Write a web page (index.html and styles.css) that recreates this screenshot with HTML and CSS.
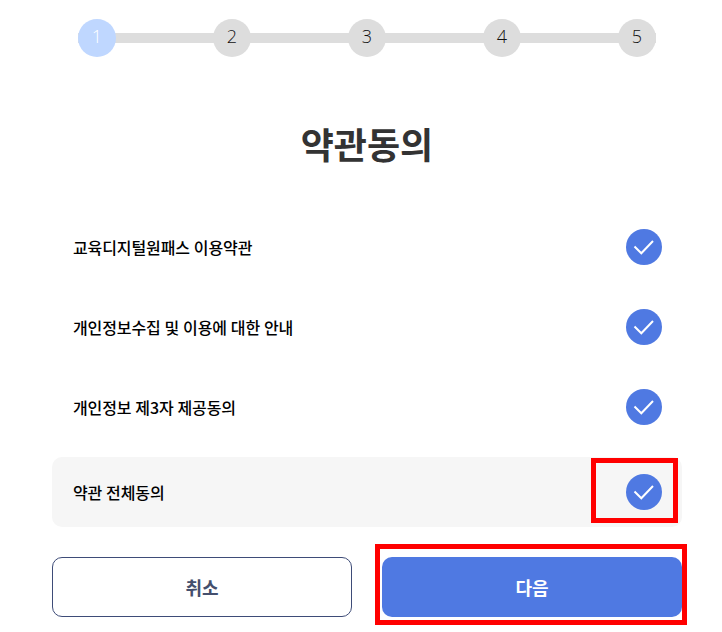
FILE: index.html
```html
<!DOCTYPE html>
<html lang="ko">
<head>
<meta charset="utf-8" />
<title>약관동의</title>
<link rel="stylesheet" href="styles.css">
</head>
<body>
<div class="wrap">

<div class="steps">
<span class="step on">1</span>
<span class="step">2</span>
<span class="step">3</span>
<span class="step">4</span>
<span class="step">5</span>
</div>

<h1 class="title">약관동의</h1>

<ul class="terms">
<li class="term">
<span>교육디지털원패스 이용약관</span>
<span class="check"><svg viewBox="0 0 36 36"><path d="M8.5 17.5l6.8 6.8L27 12"/></svg></span>
</li>
<li class="term">
<span>개인정보수집 및 이용에 대한 안내</span>
<span class="check"><svg viewBox="0 0 36 36"><path d="M8.5 17.5l6.8 6.8L27 12"/></svg></span>
</li>
<li class="term">
<span>개인정보 제3자 제공동의</span>
<span class="check"><svg viewBox="0 0 36 36"><path d="M8.5 17.5l6.8 6.8L27 12"/></svg></span>
</li>
</ul>

<div class="term_all">
<span>약관 전체동의</span>
<span class="check"><svg viewBox="0 0 36 36"><path d="M8.5 17.5l6.8 6.8L27 12"/></svg></span>
<div class="mark mark_check"></div>
</div>

<div class="btns">
<button type="button" class="btn btn_cancel">취소</button>
<button type="button" class="btn btn_next">다음</button>
<div class="mark mark_next"></div>
</div>

</div>
</body>
</html>
```

FILE: styles.css
```css
html,body{
	margin:0;
	padding:0;
	background:#fff;
}
body{
	font-family:"Noto Sans CJK KR","Noto Sans",sans-serif;
	color:#000;
}
.wrap{
	width:630px;
	margin-left:52px;
	padding:19px 0 15px;
}
.steps{
	display:flex;
	justify-content:space-between;
	margin:0 26px;
	background:linear-gradient(#ddd,#ddd) no-repeat center / 100% 10px;
}
.step{
	width:38px;
	height:38px;
	border-radius:50%;
	background:#ddd;
	color:#111;
	font-family:"Open Sans",sans-serif;
	font-size:18px;
	font-weight:300;
	line-height:35px;
	text-align:center;
}
.step.on{
	background:#bfd7ff;
	color:#fff;
}
.title{
	margin:59px 0 0;
	height:54px;
	font-size:36px;
	font-weight:700;
	line-height:54px;
	text-align:center;
	color:#333;
}
.terms{
	list-style:none;
	margin:37px 0 0;
	padding:0;
}
.term,.term_all{
	display:flex;
	align-items:center;
	justify-content:space-between;
	padding:0 20px 0 21px;
	font-size:16px;
	font-weight:500;
	letter-spacing:-0.1px;
	word-spacing:-0.5px;
}
.term{
	height:80px;
}
.term_all{
	position:relative;
	height:70px;
	margin-top:10px;
	background:#f6f6f6;
	border-radius:10px;
}
.check{
	width:36px;
	height:36px;
	border-radius:50%;
	background:#4f79e2;
}
.check svg{
	display:block;
	width:36px;
	height:36px;
}
.check path{
	fill:none;
	stroke:#fff;
	stroke-width:2;
}
.btns{
	position:relative;
	display:flex;
	gap:30px;
	margin-top:30px;
}
.btn{
	flex:0 0 300px;
	box-sizing:border-box;
	height:60px;
	padding:0;
	border-radius:10px;
	font-family:inherit;
	font-size:18px;
	font-weight:700;
}
.btn_cancel{
	background:#fff;
	border:1px solid #3e4c78;
	color:#444f6d;
}
.btn_next{
	background:#4f79e2;
	border:0;
	color:#fff;
}
.mark{
	position:absolute;
	box-sizing:border-box;
	border:5px solid #f00;
}
.mark_check{
	left:539px;
	top:1px;
	width:87px;
	height:65px;
}
.mark_next{
	left:323px;
	top:-13px;
	width:312px;
	height:81px;
}
```
